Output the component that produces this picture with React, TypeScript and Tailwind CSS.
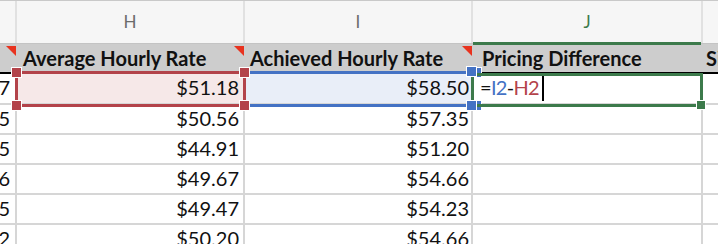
import React from "react";

const rows = [
  { g: "5", h: "$50.56", i: "$57.35" },
  { g: "5", h: "$44.91", i: "$51.20" },
  { g: "6", h: "$49.67", i: "$54.66" },
  { g: "5", h: "$49.47", i: "$54.23" },
  { g: "2", h: "$50.20", i: "$54.66" },
];

function Note() {
  return (
    <div className="absolute top-[2px] right-[1px] w-0 h-0 border-t-[10px] border-t-[#e8331f] border-l-[10px] border-l-transparent" />
  );
}

function Handle({ className, color }: { className: string; color: string }) {
  return <div className={`absolute w-[11px] h-[11px] border border-white ${color} ${className}`} />;
}

export default function App() {
  return (
    <div
      className="relative w-[718px] h-[244px] overflow-hidden bg-white text-[#111]"
      style={{ fontFamily: "Lato, 'Open Sans', sans-serif" }}
    >
      {/* column letters */}
      <div className="flex h-[44px] bg-[#f6f6f6] border-t border-[#c9c9c9] border-b border-b-[#c4c4c4] text-[17px] text-[#6b6b6b]">
        <div className="w-[17px] shrink-0 border-r-2 border-[#e1e1e1]" />
        <div className="w-[228px] shrink-0 border-r-2 border-[#e1e1e1] flex items-center justify-center">H</div>
        <div className="w-[228px] shrink-0 border-r-2 border-[#e1e1e1] flex items-center justify-center">I</div>
        <div className="w-[230px] shrink-0 border-r-2 border-[#e1e1e1] flex items-center justify-center text-[#3c7a4b] relative">
          J
          <div className="absolute left-0 right-0 bottom-[-2px] h-[3px] bg-[#3c7a4b]" />
        </div>
        <div className="flex-1" />
      </div>

      {/* table header row */}
      <div className="flex h-[30px] bg-[#cdcdcd] border-b-2 border-black text-[20px] font-bold leading-none">
        <div className="w-[17px] shrink-0 relative">
          <Note />
        </div>
        <div className="w-[228px] shrink-0 relative flex items-end pl-[6px] pb-[4px]">
          Average Hourly Rate
          <Note />
        </div>
        <div className="w-[228px] shrink-0 relative flex items-end pl-[5px] pb-[4px]">
          Achieved Hourly Rate
          <Note />
        </div>
        <div className="w-[230px] shrink-0 flex items-end pl-[9px] pb-[4px]">Pricing Difference</div>
        <div className="flex-1 flex items-end pl-[3px] pb-[4px] overflow-hidden whitespace-nowrap">Si</div>
      </div>

      {/* active row */}
      <div className="flex h-[31px] border-b-2 border-[#d6d6d6] text-[20px] leading-none">
        <div className="w-[17px] shrink-0 flex items-end justify-end pr-[7px] pb-[6px] overflow-hidden">7</div>
        <div className="w-[228px] shrink-0 bg-[#f6e8e8] flex items-end justify-end pr-[6px] pb-[6px]">$51.18</div>
        <div className="w-[228px] shrink-0 bg-[#e9eef8] flex items-end justify-end pr-[4px] pb-[6px]">$58.50</div>
        <div className="w-[230px] shrink-0 flex items-end pl-[7px] pb-[6px] tracking-[-0.7px]">
          =<span className="text-[#4472c4]">I2</span>-<span className="text-[#b3434a]">H2</span>
          <span className="inline-block w-[2px] h-[27px] bg-black ml-[3px] mb-[-4px]" />
        </div>
        <div className="flex-1" />
      </div>

      {rows.map((r, idx) => (
        <div key={idx} className="flex h-[30px] border-b-2 border-[#d6d6d6] text-[20px] leading-none">
          <div className="w-[17px] shrink-0 border-r-2 border-[#d6d6d6] flex items-end justify-end pr-[5px] pb-[5px] overflow-hidden">
            {r.g}
          </div>
          <div className="w-[228px] shrink-0 border-r-2 border-[#d6d6d6] flex items-end justify-end pr-[4px] pb-[5px]">
            {r.h}
          </div>
          <div className="w-[228px] shrink-0 border-r-2 border-[#d6d6d6] flex items-end justify-end pr-[2px] pb-[5px]">
            {r.i}
          </div>
          <div className="w-[230px] shrink-0 border-r-2 border-[#d6d6d6]" />
          <div className="flex-1" />
        </div>
      ))}

      {/* reference highlights */}
      <div className="absolute left-[15px] top-[71px] w-[231px] h-[36px] border-[3px] border-[#b3434a]">
        <Handle color="bg-[#b3434a]" className="left-[-7px] top-[-7px]" />
        <Handle color="bg-[#b3434a]" className="right-[-7px] top-[-7px]" />
        <Handle color="bg-[#b3434a]" className="left-[-7px] bottom-[-7px]" />
        <Handle color="bg-[#b3434a]" className="right-[-7px] bottom-[-7px]" />
      </div>
      <div className="absolute left-[250px] top-[71px] w-[225px] h-[36px] border-y-[3px] border-[#4472c4]">
        <Handle color="bg-[#4472c4]" className="right-[-7px] top-[-7px]" />
        <Handle color="bg-[#4472c4]" className="right-[-7px] bottom-[-7px]" />
      </div>
      <div className="absolute left-[471px] top-[73px] w-[232px] h-[34px] border-[3px] border-[#3c7a4b]">
        <div className="absolute right-[-6px] bottom-[-6px] w-[10px] h-[10px] bg-[#3c7a4b] border border-white" />
      </div>
      <div className="absolute left-[466px] top-[66px] w-[11px] h-[11px] bg-[#4472c4] border border-white" />
      <div className="absolute left-[466px] top-[100px] w-[11px] h-[11px] bg-[#4472c4] border border-white" />
    </div>
  );
}
